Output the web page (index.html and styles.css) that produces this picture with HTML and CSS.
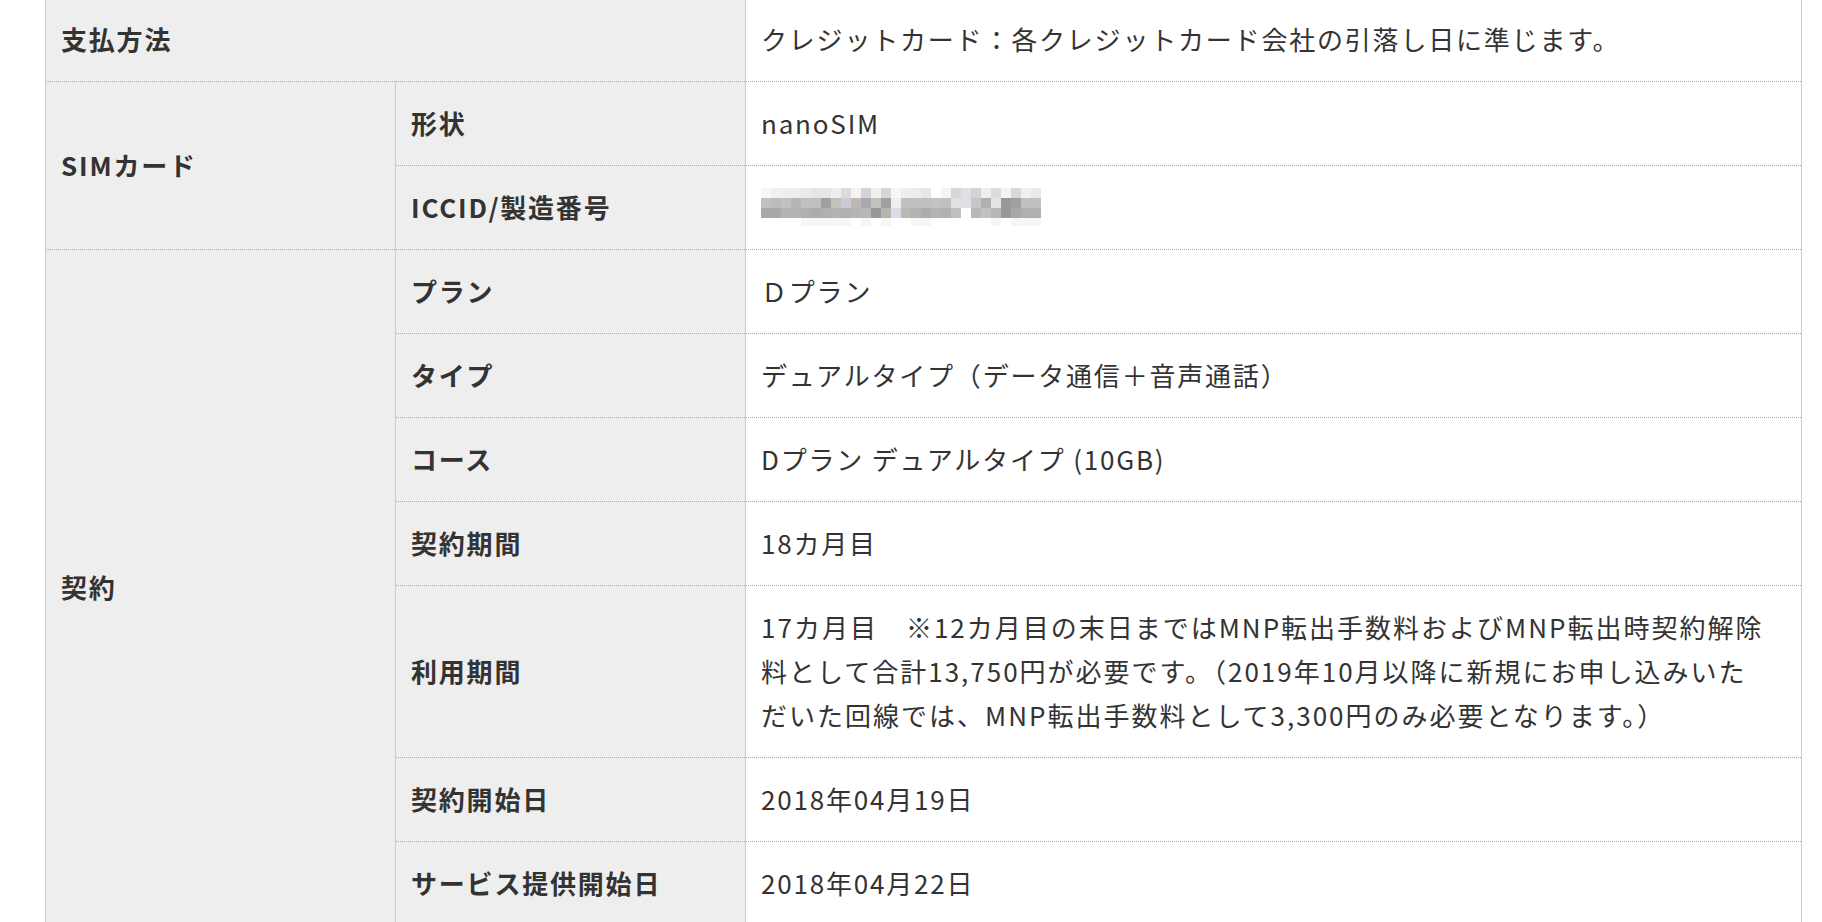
FILE: index.html
```html
<!DOCTYPE html>
<html lang="ja">
<head>
<meta charset="utf-8">
<link rel="stylesheet" href="styles.css">
</head>
<body>
<table class="info">
  <colgroup>
    <col class="c1"><col class="c2"><col class="c3">
  </colgroup>
  <tr>
    <th colspan="2">支払方法</th>
    <td>クレジットカード：各クレジットカード会社の引落し日に準じます。</td>
  </tr>
  <tr>
    <th rowspan="2">SIMカード</th>
    <th>形状</th>
    <td>nanoSIM</td>
  </tr>
  <tr>
    <th>ICCID/製造番号</th>
    <td>
      <svg class="blur" width="280" height="40" viewBox="0 0 280 40">
        <g>
          <rect x="0" y="0" width="10" height="10" fill="#f6f6f6"/><rect x="10" y="0" width="10" height="10" fill="#f0f0f0"/><rect x="20" y="0" width="10" height="10" fill="#eeeeee"/><rect x="30" y="0" width="10" height="10" fill="#eeeeee"/><rect x="40" y="0" width="10" height="10" fill="#eaeaea"/><rect x="50" y="0" width="10" height="10" fill="#e4e6e6"/><rect x="60" y="0" width="10" height="10" fill="#e6e6e6"/><rect x="70" y="0" width="10" height="10" fill="#eeeeee"/><rect x="80" y="0" width="10" height="10" fill="#dedad8"/><rect x="90" y="0" width="10" height="10" fill="#f4f4f4"/><rect x="100" y="0" width="10" height="10" fill="#d4d4d8"/><rect x="110" y="0" width="10" height="10" fill="#f0f0f0"/><rect x="120" y="0" width="10" height="10" fill="#d6d6da"/><rect x="130" y="0" width="10" height="10" fill="#f6f6f6"/><rect x="140" y="0" width="10" height="10" fill="#eeeeee"/><rect x="150" y="0" width="10" height="10" fill="#ececec"/><rect x="160" y="0" width="10" height="10" fill="#e6e6e8"/><rect x="170" y="0" width="10" height="10" fill="#ffffff"/><rect x="180" y="0" width="10" height="10" fill="#f4f4f4"/><rect x="190" y="0" width="10" height="10" fill="#d8d6da"/><rect x="200" y="0" width="10" height="10" fill="#e0e0e2"/><rect x="210" y="0" width="10" height="10" fill="#d4d2d6"/><rect x="220" y="0" width="10" height="10" fill="#eeeeee"/><rect x="230" y="0" width="10" height="10" fill="#dcdcdc"/><rect x="240" y="0" width="10" height="10" fill="#f4f4f4"/><rect x="250" y="0" width="10" height="10" fill="#d8d8d8"/><rect x="260" y="0" width="10" height="10" fill="#f0f0f0"/><rect x="270" y="0" width="10" height="10" fill="#e8e8ee"/>
        </g>
        <g>
          <rect x="0" y="10" width="10" height="10" fill="#c0c0c0"/><rect x="10" y="10" width="10" height="10" fill="#bcbcc0"/><rect x="20" y="10" width="10" height="10" fill="#c4c2be"/><rect x="30" y="10" width="10" height="10" fill="#b4b6ba"/><rect x="40" y="10" width="10" height="10" fill="#c0c0c0"/><rect x="50" y="10" width="10" height="10" fill="#c0c0c0"/><rect x="60" y="10" width="10" height="10" fill="#a0a0a0"/><rect x="70" y="10" width="10" height="10" fill="#c4c0bc"/><rect x="80" y="10" width="10" height="10" fill="#c8ccd4"/><rect x="90" y="10" width="10" height="10" fill="#c0b8b4"/><rect x="100" y="10" width="10" height="10" fill="#a8aab0"/><rect x="110" y="10" width="10" height="10" fill="#c4c2c0"/><rect x="120" y="10" width="10" height="10" fill="#a0a0a0"/><rect x="130" y="10" width="10" height="10" fill="#eceef4"/><rect x="140" y="10" width="10" height="10" fill="#c0c0c0"/><rect x="150" y="10" width="10" height="10" fill="#c0c0c0"/><rect x="160" y="10" width="10" height="10" fill="#c0c0c0"/><rect x="170" y="10" width="10" height="10" fill="#c4c2c0"/><rect x="180" y="10" width="10" height="10" fill="#c0c0c4"/><rect x="190" y="10" width="10" height="10" fill="#e4e2e0"/><rect x="200" y="10" width="10" height="10" fill="#dce0e4"/><rect x="210" y="10" width="10" height="10" fill="#ccc6c2"/><rect x="220" y="10" width="10" height="10" fill="#b0b0b4"/><rect x="230" y="10" width="10" height="10" fill="#e4e4e4"/><rect x="240" y="10" width="10" height="10" fill="#989898"/><rect x="250" y="10" width="10" height="10" fill="#a0a0a4"/><rect x="260" y="10" width="10" height="10" fill="#c0c0c0"/><rect x="270" y="10" width="10" height="10" fill="#c0c0c0"/>
        </g>
        <g>
          <rect x="0" y="20" width="10" height="10" fill="#a8a8a8"/><rect x="10" y="20" width="10" height="10" fill="#a8a8a8"/><rect x="20" y="20" width="10" height="10" fill="#b4b4b4"/><rect x="30" y="20" width="10" height="10" fill="#b4b4b4"/><rect x="40" y="20" width="10" height="10" fill="#b0b0b0"/><rect x="50" y="20" width="10" height="10" fill="#acacac"/><rect x="60" y="20" width="10" height="10" fill="#b0b0b0"/><rect x="70" y="20" width="10" height="10" fill="#b4b4b4"/><rect x="80" y="20" width="10" height="10" fill="#b0b0b4"/><rect x="90" y="20" width="10" height="10" fill="#b4b4b4"/><rect x="100" y="20" width="10" height="10" fill="#b8b8b8"/><rect x="110" y="20" width="10" height="10" fill="#98989a"/><rect x="120" y="20" width="10" height="10" fill="#b4b6b0"/><rect x="130" y="20" width="10" height="10" fill="#dcdce8"/><rect x="140" y="20" width="10" height="10" fill="#bcb8b8"/><rect x="150" y="20" width="10" height="10" fill="#b0b2b4"/><rect x="160" y="20" width="10" height="10" fill="#acacb0"/><rect x="170" y="20" width="10" height="10" fill="#b4b4b4"/><rect x="180" y="20" width="10" height="10" fill="#b0b0b0"/><rect x="190" y="20" width="10" height="10" fill="#c0c0c0"/><rect x="200" y="20" width="10" height="10" fill="#ffffff"/><rect x="210" y="20" width="10" height="10" fill="#b8b8b8"/><rect x="220" y="20" width="10" height="10" fill="#c4c2c0"/><rect x="230" y="20" width="10" height="10" fill="#b8b8b8"/><rect x="240" y="20" width="10" height="10" fill="#98989c"/><rect x="250" y="20" width="10" height="10" fill="#a8a8a8"/><rect x="260" y="20" width="10" height="10" fill="#b0b0b4"/><rect x="270" y="20" width="10" height="10" fill="#b0b0b0"/>
        </g>
        <g fill="#f6f6f6">
          <rect x="40" y="30" width="50" height="8"/><rect x="100" y="30" width="10" height="8"/><rect x="120" y="30" width="10" height="8"/><rect x="150" y="30" width="20" height="8"/><rect x="230" y="30" width="10" height="8"/><rect x="250" y="30" width="30" height="8"/>
        </g>
      </svg>
    </td>
  </tr>
  <tr>
    <th rowspan="7">契約</th>
    <th>プラン</th>
    <td>Ｄプラン</td>
  </tr>
  <tr>
    <th>タイプ</th>
    <td>デュアルタイプ（データ通信＋音声通話）</td>
  </tr>
  <tr>
    <th>コース</th>
    <td>Dプラン デュアルタイプ (10GB)</td>
  </tr>
  <tr>
    <th>契約期間</th>
    <td>18カ月目</td>
  </tr>
  <tr>
    <th>利用期間</th>
    <td class="long">17カ月目　※12カ月目の末日まではMNP転出手数料およびMNP転出時契約解除<br>料として合計13,750円が必要です。（2019年10月以降に新規にお申し込みいた<br>だいた回線では、MNP転出手数料として3,300円のみ必要となります。）</td>
  </tr>
  <tr>
    <th>契約開始日</th>
    <td>2018年04月19日</td>
  </tr>
  <tr>
    <th>サービス提供開始日</th>
    <td>2018年04月22日</td>
  </tr>
</table>
</body>
</html>
```

FILE: styles.css
```css
html, body {
  margin: 0;
  padding: 0;
  background: #ffffff;
}

body {
  font-family: "Noto Sans CJK JP", "Noto Sans", sans-serif;
  color: #333333;
  overflow: hidden;
}

.info {
  margin: -2px 0 0 45px;
  width: 1757px;
  border-collapse: collapse;
  table-layout: fixed;
  font-size: 26px;
  line-height: 44px;
  letter-spacing: 1.8px;
}

.c1 { width: 350px; }
.c2 { width: 350px; }

.info th,
.info td {
  padding: 19px 10px 20px 15px;
  border-left: 1px solid #cccccc;
  border-right: 1px solid #cccccc;
  border-bottom: 1px dotted #aaaaaa;
  text-align: left;
  vertical-align: middle;
}

.info th {
  background: #eeeeee;
  font-weight: bold;
}

.info td {
  background: #ffffff;
  font-weight: normal;
}

.info td.long {
  white-space: nowrap;
  letter-spacing: 2px;
}

.blur {
  display: block;
  margin: 1px 0 0 0;
}
```
